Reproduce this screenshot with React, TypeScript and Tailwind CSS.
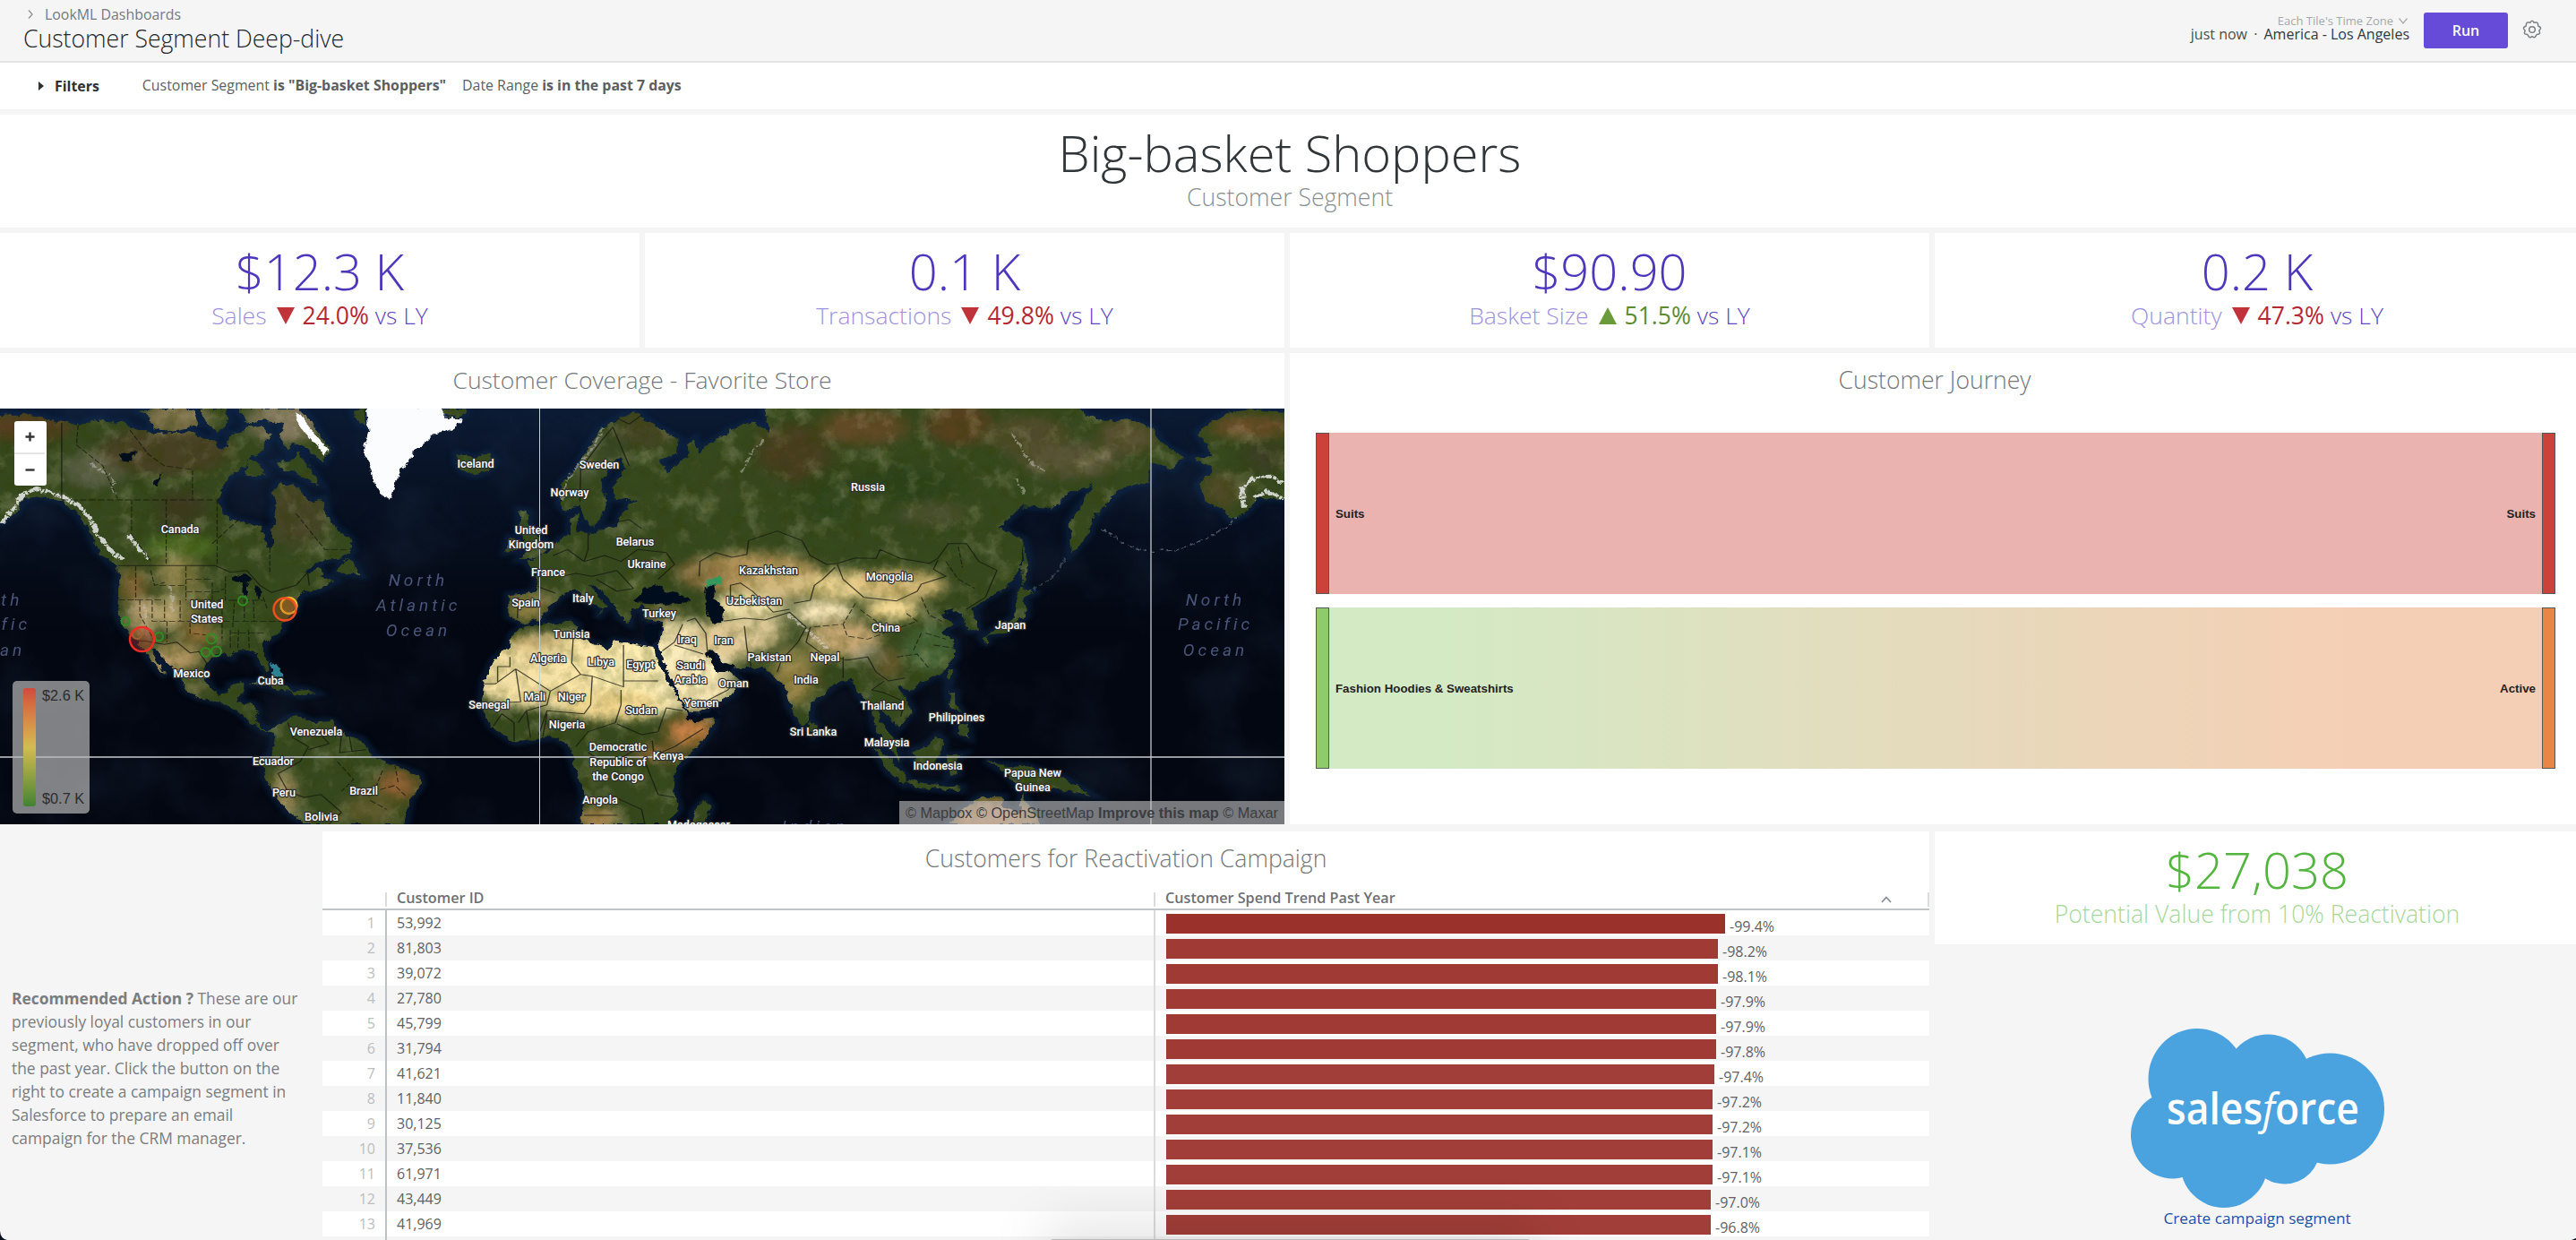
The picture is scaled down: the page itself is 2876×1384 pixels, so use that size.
import React from "react";

type Label = { t: string; x: number; y: number };

const LAND: string[] = [
  // North America
  "M-20 66 L60 70 L100 78 L150 92 L195 104 L215 88 L250 82 L262 98 L300 92 L330 118 L380 132 L420 130 L470 126 L500 150 L520 150 L530 182 L555 180 L560 132 L585 130 L600 112 L640 104 L655 140 L640 190 L606 210 L595 250 L566 262 L545 300 L530 350 L540 400 L560 418 L595 430 L626 440 L645 468 L652 518 L662 516 L662 450 L672 425 L664 395 L674 365 L664 330 L680 298 L715 306 L735 325 L752 365 L785 350 L792 400 L815 445 L850 485 L856 525 L830 550 L790 555 L762 572 L745 592 L760 600 L775 582 L785 610 L815 625 L780 652 L752 664 L738 655 L722 690 L715 725 L700 750 L688 765 L685 790 L640 838 L640 880 L656 912 L650 930 L634 905 L625 870 L600 855 L570 858 L562 880 L540 866 L512 885 L498 905 L498 950 L512 985 L530 1004 L555 1000 L562 972 L592 965 L588 1000 L575 1032 L615 1038 L626 1060 L622 1098 L650 1128 L680 1112 L672 1140 L648 1130 L612 1104 L584 1064 L540 1034 L486 1016 L452 990 L434 935 L402 890 L376 852 L366 850 L380 890 L404 942 L396 936 L352 858 L324 818 L298 770 L286 725 L288 650 L292 604 L280 575 L236 520 L216 452 L190 400 L150 360 L96 338 L60 352 L36 400 L-20 448 Z",
  "M340 56 L400 48 L470 48 L482 100 L440 118 L404 124 L370 112 L366 80 Z",
  "M486 48 L550 48 L556 90 L530 130 L505 100 Z",
  "M580 48 L728 48 L752 80 L775 130 L804 186 L788 224 L760 200 L735 170 L712 160 L700 190 L680 150 L690 100 L640 88 L604 100 Z",
  "M606 212 L626 228 L644 270 L622 278 L598 262 Z",
  "M670 230 L712 220 L725 195 L778 300 L750 290 L720 262 L690 254 Z",
  "M836 556 L850 552 L876 606 L840 600 L822 596 Z",
  "M860 56 L884 50 L890 105 L872 100 Z",
  "M1080 48 L1132 48 L1130 68 L1100 80 L1076 66 Z",
  "M1112 200 L1135 205 L1150 218 L1185 198 L1204 226 L1188 256 L1156 272 L1124 256 L1112 230 Z",
  "M604 972 L640 958 L690 976 L724 998 L690 994 L650 974 Z",
  "M706 994 L740 988 L766 1002 L730 1010 Z",
  // South America
  "M672 1120 L700 1084 L720 1076 L760 1098 L806 1096 L835 1138 L880 1158 L908 1214 L960 1244 L1018 1276 L1024 1306 L996 1356 L985 1440 L740 1440 L700 1396 L668 1340 L645 1284 L644 1234 L664 1190 Z",
  // British Isles
  "M1264 390 L1284 394 L1286 440 L1302 470 L1332 506 L1318 544 L1264 552 L1290 516 L1264 456 Z",
  "M1240 480 L1262 486 L1258 522 L1230 530 Z",
  // Eurasia
  "M1568 86 L1545 55 L1500 84 L1460 120 L1434 170 L1404 246 L1364 300 L1360 366 L1376 392 L1408 370 L1424 420 L1440 446 L1460 420 L1476 362 L1460 300 L1482 240 L1510 210 L1520 250 L1492 310 L1498 350 L1550 356 L1530 372 L1512 400 L1500 440 L1436 466 L1400 454 L1410 400 L1388 416 L1386 468 L1362 488 L1330 534 L1280 562 L1304 600 L1308 655 L1278 668 L1238 672 L1238 744 L1276 768 L1314 752 L1338 706 L1366 672 L1398 652 L1426 690 L1464 722 L1452 750 L1474 708 L1430 640 L1450 640 L1484 686 L1512 750 L1530 766 L1532 726 L1560 700 L1570 752 L1608 762 L1612 790 L1602 850 L1622 920 L1652 1010 L1674 1064 L1700 1066 L1780 1006 L1800 960 L1776 930 L1740 930 L1716 860 L1728 856 L1760 900 L1800 918 L1862 920 L1888 956 L1906 970 L1920 1040 L1950 1112 L1966 1096 L1972 1034 L2034 968 L2068 950 L2092 1010 L2120 1050 L2128 1120 L2170 1200 L2188 1230 L2184 1178 L2140 1096 L2136 1050 L2158 1072 L2184 1118 L2216 1060 L2184 978 L2214 990 L2246 960 L2292 930 L2322 880 L2320 830 L2290 792 L2322 768 L2288 744 L2310 718 L2336 736 L2356 790 L2378 790 L2366 720 L2400 680 L2454 640 L2490 560 L2486 486 L2430 450 L2480 376 L2560 380 L2606 326 L2660 300 L2640 350 L2602 430 L2604 530 L2640 480 L2664 404 L2720 324 L2764 300 L2792 296 L2796 230 L2850 250 L2878 208 L2830 172 L2800 112 L2740 82 L2690 92 L2636 68 L2620 40 L1860 40 L1872 130 L1830 92 L1776 120 L1724 168 L1700 200 L1690 150 L1672 170 L1676 210 L1620 262 L1600 220 L1646 200 L1650 150 L1600 110 Z",
  // Africa
  "M1276 776 L1320 770 L1390 760 L1404 775 L1396 810 L1440 832 L1480 856 L1494 826 L1540 836 L1590 846 L1594 880 L1620 950 L1652 1030 L1676 1086 L1736 1076 L1732 1112 L1690 1190 L1644 1252 L1638 1330 L1650 1390 L1620 1440 L1412 1440 L1424 1346 L1398 1250 L1384 1180 L1350 1146 L1250 1166 L1196 1112 L1170 1050 L1178 960 L1204 886 L1238 850 L1246 806 Z",
  "M1716 1356 L1728 1380 L1712 1440 L1680 1440 L1690 1392 Z",
  "M1970 1092 L1984 1110 L1976 1136 L1966 1120 Z",
  // East Asian islands
  "M2488 488 L2498 560 L2486 644 L2482 560 Z",
  "M2482 644 L2514 664 L2490 680 L2494 744 L2464 772 L2440 800 L2400 806 L2400 840 L2388 816 L2440 770 L2468 744 L2472 690 Z",
  "M2308 922 L2316 930 L2308 962 L2302 944 Z",
  "M2306 994 L2322 1000 L2322 1040 L2340 1068 L2330 1062 L2312 1046 Z M2330 1108 L2350 1100 L2356 1150 L2330 1134 Z",
  "M2218 1196 L2250 1180 L2280 1144 L2294 1160 L2286 1206 L2268 1244 L2226 1234 Z",
  "M2122 1176 L2156 1210 L2204 1280 L2196 1304 L2160 1264 Z M2190 1292 L2260 1304 L2336 1316 L2334 1326 L2240 1318 Z",
  "M2302 1210 L2340 1206 L2318 1232 L2330 1270 L2306 1284 Z",
  "M2396 1224 L2430 1240 L2500 1246 L2590 1288 L2650 1340 L2600 1330 L2540 1316 L2480 1320 L2450 1270 Z",
  "M2306 1440 L2340 1390 L2390 1346 L2440 1348 L2436 1384 L2480 1406 L2486 1340 L2504 1380 L2530 1440 Z",
  // Alaska on the far side of the date line
  "M2912 130 L2944 96 L2990 60 L3050 50 L3130 64 L3130 350 L3060 348 L3026 400 L2992 420 L2978 388 L2936 362 L2914 300 L2952 250 L2904 216 L2950 206 Z",
];

// Soft colour patches: cx, cy, rx, ry, colour, opacity
const PATCHES: [number, number, number, number, string, number][] = [
  [60, 110, 110, 50, "#5e3c20", 0.8], [230, 250, 70, 60, "#7d776c", 0.6], [400, 190, 160, 80, "#4e4026", 0.8],
  [430, 80, 80, 50, "#8b7a55", 0.9], [690, 90, 90, 70, "#8d7f66", 0.9], [720, 400, 80, 110, "#4b452a", 0.8],
  [440, 380, 60, 60, "#3f3520", 0.7], [440, 510, 90, 45, "#4d6d22", 0.9], [430, 600, 50, 60, "#a08f58", 0.9],
  [325, 640, 30, 60, "#936c3b", 0.9], [350, 740, 40, 60, "#c9ab80", 1], [415, 730, 40, 60, "#bfa873", 1],
  [470, 700, 30, 90, "#80733e", 0.7], [480, 800, 40, 40, "#a8773e", 0.8], [430, 880, 60, 50, "#b69863", 0.95],
  [400, 900, 20, 40, "#c9a77c", 0.8], [470, 980, 40, 20, "#71683a", 0.8], [580, 720, 60, 100, "#3a5623", 0.6],
  [690, 1340, 26, 80, "#cba878", 0.9], [965, 1310, 50, 50, "#a8683a", 0.8], [900, 1390, 70, 50, "#6f6434", 0.7],
  [1300, 700, 60, 50, "#9a8750", 0.5], [1280, 720, 36, 36, "#a98e50", 0.8], [1480, 170, 60, 80, "#3e482a", 0.6],
  [1420, 200, 24, 90, "#8d8b80", 0.5], [1570, 120, 70, 60, "#4b4426", 0.7],
  [1440, 930, 320, 130, "#fbe6a8", 1], [1560, 960, 120, 120, "#ffefb4", 1], [1260, 940, 90, 100, "#f8e2a6", 1],
  [1490, 1040, 120, 50, "#f2d68e", 1], [1300, 830, 60, 25, "#b59459", 0.7], [1690, 900, 90, 110, "#ffefc0", 1],
  [1700, 1000, 90, 60, "#fbe9b6", 1], [1650, 800, 60, 50, "#f6e4b2", 1], [1770, 820, 90, 70, "#e2ca96", 1],
  [1680, 1130, 60, 50, "#c98046", 1], [1600, 1200, 60, 30, "#a7703d", 0.7], [1450, 1420, 50, 40, "#b58d56", 0.9],
  [1830, 600, 160, 70, "#b5955b", 1], [1900, 640, 90, 50, "#d4b87c", 0.9], [1820, 710, 90, 50, "#f2e1a8", 1],
  [2000, 730, 80, 40, "#fdeabb", 1], [1850, 790, 60, 60, "#e6d09e", 0.9], [2050, 640, 100, 50, "#ead08c", 1],
  [2190, 640, 110, 50, "#dcbd7a", 0.95], [2170, 720, 64, 42, "#f8dc94", 1], [2050, 820, 90, 60, "#c8a873", 1],
  [1930, 950, 50, 90, "#a38b4c", 0.9], [1960, 870, 70, 30, "#89834b", 0.8], [2160, 900, 30, 50, "#8d6a3c", 0.7],
  [2260, 850, 60, 80, "#4a6a3c", 0.8], [2110, 870, 30, 20, "#b9b2a4", 0.8],
  [1930, 200, 90, 100, "#4f3c20", 0.75], [2100, 110, 110, 60, "#6a4c2c", 0.85], [2330, 100, 80, 70, "#633f20", 0.8],
  [2500, 140, 100, 70, "#5b5030", 0.7], [2600, 220, 120, 60, "#62583c", 0.8], [2200, 300, 120, 60, "#2c421a", 0.7],
  [2270, 400, 80, 40, "#545638", 0.7], [2010, 350, 60, 100, "#2f451d", 0.7], [2740, 140, 70, 60, "#69573a", 0.7],
  [1800, 300, 120, 60, "#3b4823", 0.6], [1700, 600, 60, 40, "#7a5f30", 0.8], [2420, 1420, 110, 60, "#c48858", 1],
  [3040, 110, 100, 40, "#70502c", 0.9], [3080, 210, 60, 50, "#3d3d26", 0.8], [2970, 320, 50, 60, "#5a4b2b", 0.7],
  [1600, 730, 60, 24, "#857447", 0.7], [1545, 640, 30, 40, "#5b6b30", 0.6],
];

const SNOW: string[] = [
  "M890 40 L1080 48 L1078 80 L1128 82 L1104 114 L1056 132 L1036 156 L1012 186 L1000 214 L984 232 L962 290 L950 354 L922 328 L906 284 L902 240 L884 200 L896 120 Z",
  "M712 60 L730 70 L752 110 L800 186 L790 206 L754 150 L724 96 Z",
];

const WHITE_LINES: string[] = [
  "M4 430 L40 370 L60 330 L96 318 L150 342 L190 372 L216 410 L240 470 L266 520 L298 552",
  "M310 470 L336 510 L360 550",
  "M3026 380 L3020 320 L3050 280 L3090 275 L3123 295 M3050 350 L3080 325 L3123 350",
];

const FROST_LINES: string[] = [
  "M1364 350 L1378 290 L1430 200 L1470 110",
  "M2460 130 L2500 220 L2540 260 M2470 280 L2490 330",
  "M1800 260 L1830 190 L1860 150",
  "M220 230 L270 280 L280 330",
  "M350 700 L356 760 M414 640 L420 730",
];

const BORDERS: string[] = [
  "M150 96 V354", "M288 574 H524 L560 596 L600 590 L632 640 L660 664 L720 640 L748 596 L752 640",
  "M320 826 L350 826 L400 838 L430 830 L462 866 L484 862 L506 908",
  "M700 1100 L712 1150 L750 1180 L730 1230 L676 1270 L700 1330 L740 1350 L780 1340 L830 1400 L800 1440 M750 1190 L800 1170 L780 1140 M830 1140 L826 1200 L890 1190 M850 1150 L856 1196",
  "M1394 810 L1390 900 L1412 938 L1440 944 L1516 980 V840 M1412 938 L1338 994 L1254 920 L1204 970 H1176 M1240 880 V912 H1210 V966 M1254 920 L1266 1030 L1180 1036 M1338 994 L1330 1040 L1280 1060 L1260 1100 M1440 944 L1436 1040 L1420 1070 L1330 1060 L1310 1140 M1510 990 V1040 L1496 1100 L1430 1130 L1400 1180 M1516 960 H1600 M1500 1104 L1560 1140 L1600 1130 L1620 1050 L1660 1060 M1586 1160 L1590 1210 L1640 1180 L1710 1120 M1200 1110 L1220 1070 L1250 1100 V1160 M1280 1060 L1290 1150 M1330 1070 L1320 1146",
  "M1430 1200 L1480 1240 L1560 1180 M1568 1230 L1600 1340 L1640 1350 M1480 1340 L1560 1390 L1568 1440 M1420 1410 H1500",
  "M1500 80 L1530 100 L1560 70 M1410 360 L1412 250 L1460 160 L1490 110 L1530 240",
  "M1430 465 V520 L1420 560 L1380 520 L1345 540 M1420 560 L1470 540 L1510 560 L1550 520 L1620 530 L1640 570 L1600 620 M1366 610 L1400 600 L1440 610 L1500 590 L1540 650 L1500 660 L1450 620 M1300 640 L1350 666 M1260 680 L1258 750 M1490 430 L1530 420 L1560 450",
  "M1700 610 L1702 560 L1740 530 L1780 546 L1816 536 L1820 490 L1890 458 L1950 490 L1970 540 L2010 570 L2036 566 L2080 548 L2130 550 L2140 520 L2190 550 L2260 566 L2280 550 L2306 500 L2350 500 L2380 560 L2424 590 L2396 680 L2350 720",
  "M2036 570 L2050 620 L2100 680 L2180 692 L2230 660 L2240 636 L2300 610 L2270 586 L2280 556",
  "M2030 580 L2000 620 L1980 640 L1970 690 L1930 700 M1776 690 V640 L1800 632 L1830 660 L1880 730 L1920 720 M1760 760 L1810 750 L1860 756 L1920 730 L1960 780 L1940 830 L1900 890 L1890 930",
  "M1670 760 L1690 750 L1716 800 L1720 860 M1810 776 L1816 850 L1826 910 M1610 860 L1640 830 L1660 770 M1640 840 L1710 870 M1700 1040 L1770 990 L1790 960",
  "M1970 780 L1960 830 L2000 870 L2060 890 L2110 880 L2130 930 L2160 960 L2200 950 M2050 880 V950 M2150 960 L2120 990 L2150 1000 L2200 1030 L2190 1080",
];

const DASHED: string[] = [
  "M150 354 H528 M190 104 L186 170 L250 240 L286 350 M316 120 L360 200 L400 240 L468 252 V354 M404 354 V574 M320 354 V470 L368 560 M516 500 L580 420 M528 354 V574 M656 470 V604 M720 400 L790 520 H850",
  "M288 688 H400 M330 576 V690 M366 590 L376 640 L400 630 M452 576 V690 M388 640 H452 M452 620 H514 M452 662 H530 L548 650 M400 690 V760 M462 690 H540 M438 690 V760 M340 690 V740 L376 826 M370 690 V760 H560 M406 760 V830 M462 764 V800 L500 806 M516 630 V686 M548 610 V690 L570 690 L566 780 M568 690 H640 M594 690 V760 M616 690 L618 760 M640 680 L650 720 M566 760 H690 M560 800 H640 M580 790 L578 856 M604 790 L606 850 M560 790 V850 M540 700 V820",
  "M820 1230 L860 1290 L830 1330 M930 1260 L910 1330 L960 1310 L990 1350 M960 1240 L968 1300 M900 1360 L940 1390",
  "M2080 700 L2050 770 L1970 780 M2050 770 L2060 810 L2110 820 L2150 800 L2130 760 L2090 720 M2170 790 L2230 760 L2200 730 M2240 680 L2260 740 L2290 760 M2180 880 L2230 870 L2260 920 M2250 800 L2300 820 M2300 560 L2330 620 L2370 650 M2330 510 L2340 580 M2240 800 L2220 860 M2270 840 L2320 850",
];

const COUNTRIES: Label[] = [
  { t: "Iceland", x: 531, y: 522 }, { t: "Sweden", x: 669, y: 523 }, { t: "Norway", x: 636, y: 554 },
  { t: "Canada", x: 201, y: 595 }, { t: "United", x: 593, y: 596 }, { t: "Kingdom", x: 593, y: 612 },
  { t: "Belarus", x: 709, y: 609 }, { t: "Ukraine", x: 722, y: 634 }, { t: "France", x: 612, y: 643 },
  { t: "Italy", x: 651, y: 672 }, { t: "Spain", x: 587, y: 677 }, { t: "United", x: 231, y: 679 },
  { t: "States", x: 231, y: 695 }, { t: "Tunisia", x: 638, y: 712 }, { t: "Algeria", x: 612, y: 739 },
  { t: "Libya", x: 671, y: 743 }, { t: "Egypt", x: 715, y: 746 }, { t: "Mexico", x: 214, y: 756 },
  { t: "Cuba", x: 302, y: 764 }, { t: "Mali", x: 597, y: 782 }, { t: "Niger", x: 638, y: 782 },
  { t: "Senegal", x: 546, y: 791 }, { t: "Sudan", x: 716, y: 797 }, { t: "Nigeria", x: 633, y: 813 },
  { t: "Venezuela", x: 353, y: 821 }, { t: "Democratic", x: 690, y: 838 }, { t: "Republic of", x: 690, y: 855 },
  { t: "the Congo", x: 690, y: 871 }, { t: "Ecuador", x: 305, y: 854 }, { t: "Peru", x: 317, y: 889 },
  { t: "Brazil", x: 406, y: 887 }, { t: "Angola", x: 670, y: 897 }, { t: "Bolivia", x: 359, y: 916 },
  { t: "Russia", x: 969, y: 548 }, { t: "Kazakhstan", x: 858, y: 641 }, { t: "Mongolia", x: 993, y: 648 },
  { t: "Uzbekistan", x: 842, y: 675 }, { t: "Turkey", x: 736, y: 689 }, { t: "China", x: 989, y: 705 },
  { t: "Japan", x: 1128, y: 702 }, { t: "Iraq", x: 767, y: 718 }, { t: "Iran", x: 808, y: 719 },
  { t: "Pakistan", x: 859, y: 738 }, { t: "Nepal", x: 921, y: 738 }, { t: "Saudi", x: 771, y: 747 },
  { t: "Arabia", x: 771, y: 763 }, { t: "Oman", x: 819, y: 767 }, { t: "India", x: 900, y: 763 },
  { t: "Yemen", x: 783, y: 789 }, { t: "Thailand", x: 985, y: 792 }, { t: "Philippines", x: 1068, y: 805 },
  { t: "Sri Lanka", x: 908, y: 821 }, { t: "Malaysia", x: 990, y: 833 }, { t: "Kenya", x: 746, y: 848 },
  { t: "Indonesia", x: 1047, y: 859 }, { t: "Papua New", x: 1153, y: 867 }, { t: "Guinea", x: 1153, y: 883 },
  { t: "Madagascar", x: 780, y: 925 },
];

const OCEANS: Label[] = [
  { t: "North", x: 465, y: 654 }, { t: "Atlantic", x: 465, y: 682 }, { t: "Ocean", x: 465, y: 710 },
  { t: "North", x: 1355, y: 676 }, { t: "Pacific", x: 1355, y: 703 }, { t: "Ocean", x: 1355, y: 732 },
  { t: "North", x: -10, y: 676 }, { t: "Pacific", x: -10, y: 703 }, { t: "Ocean", x: -10, y: 732 },
  { t: "Indian", x: 908, y: 929 },
];

function WorldMap() {
  return (
    <svg className="block h-[464px] w-[1434px]" viewBox="0 456 1434 464">
      <defs>
        <filter id="rough" x="-5%" y="-5%" width="110%" height="110%">
          <feTurbulence type="fractalNoise" baseFrequency="0.12" numOctaves="3" seed="4" result="n" />
          <feDisplacementMap in="SourceGraphic" in2="n" scale="8" xChannelSelector="R" yChannelSelector="G" />
        </filter>
        <filter id="halo" x="-5%" y="-5%" width="110%" height="110%"><feGaussianBlur stdDeviation="7" /></filter>
        <filter id="soft" x="-60%" y="-60%" width="220%" height="220%"><feGaussianBlur stdDeviation="18" /></filter>
        <filter id="grain" x="0" y="0" width="100%" height="100%">
          <feTurbulence type="fractalNoise" baseFrequency="0.06" numOctaves="5" seed="9" />
          <feColorMatrix type="matrix" values="0 0 0 0 0.03  0 0 0 0 0.05  0 0 0 0 0  1.9 0 0 0 -0.75" />
        </filter>
        <filter id="speck" x="0" y="0" width="100%" height="100%">
          <feTurbulence type="fractalNoise" baseFrequency="0.04" numOctaves="5" seed="23" />
          <feColorMatrix type="matrix" values="0 0 0 0 0.74  0 0 0 0 0.68  0 0 0 0 0.42  0 2 0 0 -1" />
        </filter>
        <filter id="swell" x="0" y="0" width="100%" height="100%">
          <feTurbulence type="fractalNoise" baseFrequency="0.012" numOctaves="4" seed="7" />
          <feColorMatrix type="matrix" values="0 0 0 0 0.06  0 0 0 0 0.12  0 0 0 0 0.24  0 1.8 0 0 -0.8" />
        </filter>
        <clipPath id="land">
          <path transform="translate(0 440) scale(0.45918 0.33333)" d={LAND.join(" ")} />
        </clipPath>
        <linearGradient id="polar" x1="0" y1="0" x2="0" y2="1">
          <stop offset="0" stopColor="#0b1a33" />
          <stop offset="0.35" stopColor="#081326" stopOpacity="0.5" />
          <stop offset="0.6" stopColor="#030711" stopOpacity="0" />
        </linearGradient>
      </defs>
      <rect y="456" width="1434" height="464" fill="#030711" />
      <rect y="456" width="1434" height="464" fill="url(#polar)" />
      <rect y="456" width="1434" height="464" filter="url(#swell)" opacity="0.18" />
      <g transform="translate(0 440) scale(0.45918 0.33333)">
        <path d={LAND.join(" ")} fill="none" stroke="#0f2b50" strokeWidth="24" opacity="0.5" filter="url(#halo)" />
      </g>
      <g filter="url(#rough)">
        <g transform="translate(0 440) scale(0.45918 0.33333)">
          <path d={LAND.join(" ")} fill="#36481f" />
        </g>
        <g clipPath="url(#land)">
          <g transform="translate(0 440) scale(0.45918 0.33333)">
            {PATCHES.map(([cx, cy, rx, ry, fill, o], i) => (
              <ellipse key={i} cx={cx} cy={cy} rx={rx} ry={ry} fill={fill} opacity={o} filter="url(#soft)" />
            ))}
          </g>
          <rect y="456" width="1434" height="464" filter="url(#speck)" opacity="0.35" />
          <rect y="456" width="1434" height="464" filter="url(#grain)" opacity="0.36" />
        </g>
        <g transform="translate(0 440) scale(0.45918 0.33333)">
          {/* inland seas, gulfs and lakes */}
          <path
            fill="#05101f"
            d="M1540 690 L1570 650 L1600 638 L1620 662 L1664 676 L1680 696 L1620 704 L1568 702 Z M1718 640 L1740 636 L1736 680 L1760 720 L1758 762 L1730 764 L1714 700 Z M1572 770 L1606 770 L1604 800 L1590 840 L1568 830 Z M1714 856 L1726 856 L1750 896 L1790 910 L1772 932 L1742 926 Z M1668 1078 L1740 1060 L1756 1078 L1690 1096 Z M570 610 L600 602 L614 620 L598 630 L600 676 L588 674 L590 634 L560 620 Z M620 630 L634 650 L630 690 L620 660 Z M290 200 L330 190 L320 220 L300 230 Z M370 300 L396 260 L380 310 Z"
          />
          <path fill="#1f9f62" opacity="0.8" d="M1716 622 L1750 610 L1754 636 L1722 646 Z" />
          <path fill="#3aa0b0" opacity="0.8" d="M660 900 L674 906 L690 946 L664 946 Z" />
          <path d={SNOW.join(" ")} fill="#fbfcfd" />
          <path d={WHITE_LINES.join(" ")} fill="none" stroke="#e9ebea" strokeWidth="11" strokeDasharray="26 4 9 3" opacity="0.85" />
          <path d={FROST_LINES.join(" ")} fill="none" stroke="#c5c6be" strokeWidth="7" strokeDasharray="18 6 6 5" opacity="0.5" />
          <path d="M3010 410 Q2910 530 2800 526 Q2730 510 2680 452" fill="none" stroke="#7d8c96" strokeWidth="4" strokeDasharray="12 8" opacity="0.6" />
          <path d="M2590 550 Q2570 620 2500 662" fill="none" stroke="#51677a" strokeWidth="4" strokeDasharray="14 6" opacity="0.6" />
          <path d="M1920 740 L1970 800 L2010 850" fill="none" stroke="#d8d2c8" strokeWidth="10" strokeDasharray="10 5" opacity="0.6" />
        </g>
      </g>
      <g transform="translate(0 440) scale(0.45918 0.33333)" fill="none" stroke="#15170f" strokeWidth="3" opacity="0.75">
        <path d={BORDERS.join(" ")} strokeLinejoin="round" />
        <path d={DASHED.join(" ")} strokeDasharray="16 6" strokeWidth="2.6" />
      </g>
      <g stroke="#c9ccd0">
        <path d="M602.5 456 V920" strokeWidth="1" />
        <path d="M1285 456 V920" strokeWidth="1.6" opacity="0.8" />
        <path d="M0 845 H1434" strokeWidth="2" opacity="0.75" />
      </g>
      <g fill="#56628c" fontFamily="Roboto, sans-serif" fontSize="19" fontStyle="italic" letterSpacing="4" textAnchor="middle" opacity="0.85">
        {OCEANS.map((l, i) => (
          <text key={i} x={l.x + 2} y={l.y}>{l.t}</text>
        ))}
      </g>
      <g fill="#fff" stroke="#2d2f31" strokeWidth="2.4" strokeLinejoin="round" paintOrder="stroke" fontFamily="Roboto, sans-serif" fontSize="12.6" fontWeight="500" textAnchor="middle">
        {COUNTRIES.map((l, i) => (
          <text key={i} x={l.x} y={l.y}>{l.t}</text>
        ))}
      </g>
      <g fill="#3b8c1e" fillOpacity="0.12" stroke="#2f8d22" strokeWidth="2">
        <circle cx="271" cy="670.5" r="5" />
        <circle cx="140" cy="693.5" r="4.5" />
        <circle cx="153" cy="708" r="5" stroke="#8a7a35" />
        <circle cx="177.5" cy="710.5" r="4.5" />
        <circle cx="236" cy="713" r="5.5" />
        <circle cx="229.5" cy="728" r="5" />
        <circle cx="241.5" cy="727" r="5.5" />
      </g>
      <circle cx="158.5" cy="713.5" r="13.5" fill="#d02a20" fillOpacity="0.3" stroke="#f12c22" strokeWidth="2.4" />
      <circle cx="322.5" cy="676" r="9" fill="#d08a20" fillOpacity="0.3" stroke="#f2b92b" strokeWidth="2.4" />
      <circle cx="318" cy="680" r="12.5" fill="#c05020" fillOpacity="0.3" stroke="#f4501f" strokeWidth="2.4" />
    </svg>
  );
}

type Kpi = { value: string; label: string; up?: boolean; pct: string };

const KPIS: Kpi[] = [
  { value: "$12.3 K", label: "Sales", pct: "24.0%" },
  { value: "0.1 K", label: "Transactions", pct: "49.8%" },
  { value: "$90.90", label: "Basket Size", up: true, pct: "51.5%" },
  { value: "0.2 K", label: "Quantity", pct: "47.3%" },
];

function KpiTile({ value, label, up, pct }: Kpi) {
  return (
    <div className="flex h-[128px] flex-col items-center bg-white pt-[10px] last:pl-1">
      <div className="text-[56px] leading-[64px] font-light text-[#4f37bd]">{value}</div>
      <div className="flex items-center text-[26.5px] leading-[36px] font-light">
        <span className="text-[#a091dc]">{label}</span>
        <svg className="mr-[9px] ml-[11px] h-[19px] w-[20px]" viewBox="0 0 20 19">
          <path d={up ? "M0 19 H20 L10 0 Z" : "M0 0 H20 L10 19 Z"} fill={up ? "#6a9a3a" : "#c1333a"} />
        </svg>
        <span className={up ? "font-normal text-[#5c8c2e]" : "font-normal text-[#b32833]"}>{pct}</span>
        <span className="ml-[7px] text-[#5f46c2]">vs LY</span>
      </div>
    </div>
  );
}

const ROWS: { id: string; pct: string; end: number }[] = [
  { id: "53,992", pct: "-99.4%", end: 624 }, { id: "81,803", pct: "-98.2%", end: 616 },
  { id: "39,072", pct: "-98.1%", end: 616 }, { id: "27,780", pct: "-97.9%", end: 614 },
  { id: "45,799", pct: "-97.9%", end: 614 }, { id: "31,794", pct: "-97.8%", end: 614 },
  { id: "41,621", pct: "-97.4%", end: 612 }, { id: "11,840", pct: "-97.2%", end: 610 },
  { id: "30,125", pct: "-97.2%", end: 610 }, { id: "37,536", pct: "-97.1%", end: 610 },
  { id: "61,971", pct: "-97.1%", end: 610 }, { id: "43,449", pct: "-97.0%", end: 608 },
  { id: "41,969", pct: "-96.8%", end: 608 },
];

function ReactivationTable() {
  return (
    <section className="h-[456px] w-[1794px] overflow-hidden bg-white">
      <h2 className="pt-[13px] text-center text-[26.6px] leading-[34px] font-light text-[#73787b]">
        Customers for Reactivation Campaign
      </h2>
      <div className="mt-[21px] flex h-[18px] items-center border-b-2 border-transparent text-[16.2px] font-semibold text-[#6e7072]">
        <div className="h-4 w-[72px] border-r-2 border-[#dcdcdc]" />
        <div className="h-4 w-[858px] border-r-2 border-[#dcdcdc] pl-[11px] leading-[13px]">Customer ID</div>
        <div className="flex h-4 flex-1 justify-between border-r-2 border-[#dcdcdc] pl-[11px] leading-[13px]">
          Customer Spend Trend Past Year
          <svg className="mt-1 mr-[40px] h-[8px] w-[12px]" viewBox="0 0 12 8" fill="none" stroke="#8a8d99" strokeWidth="1.8">
            <path d="M1 7 L6 1.5 L11 7" />
          </svg>
        </div>
      </div>
      <div className="border-t-2 border-[#bfc5c8]">
        {ROWS.map((r, i) => (
          <div key={r.id} className={`flex h-7 text-[16px] ${i % 2 ? "bg-[#f5f5f5]" : "bg-white"}`}>
            <div className="w-[72px] border-r-2 border-[#bfc2c5] pr-[11px] text-right leading-7 text-[#bdbdbd]">{i + 1}</div>
            <div className="w-[858px] border-r-2 border-[#dcdcdc] pl-[11px] leading-7 text-[#5f6264]">{r.id}</div>
            <div className="flex items-start pt-1 pl-3">
              <div className={`h-[22px] ${i === 0 ? "bg-[#9a322b]" : i < 6 ? "bg-[#9f3a34]" : "bg-[#a23e39]"}`} style={{ width: r.end }} />
              <span className="ml-[5px] leading-7 text-[#5f6264]">{r.pct}</span>
            </div>
          </div>
        ))}
        <div className="flex h-1 bg-[#f5f5f5]">
          <div className="w-[72px] border-r-2 border-[#bfc2c5]" />
          <div className="w-[858px] border-r-2 border-[#dcdcdc]" />
        </div>
      </div>
    </section>
  );
}

function SankeyLink({ left, right, source, target, flow }: { left: string; right: string; source: string; target: string; flow: string }) {
  return (
    <div className="flex h-[180px]">
      <div className={`w-[15px] border border-[#55585a] ${source}`} />
      <div className={`flex flex-1 items-center justify-between px-[7px] pt-[2px] font-['Liberation_Sans',sans-serif] text-[13.3px] font-bold text-[#222] ${flow}`}>
        <span>{left}</span>
        <span>{right}</span>
      </div>
      <div className={`w-[15px] border border-[#55585a] ${target}`} />
    </div>
  );
}

function Gear() {
  return (
    <svg className="h-[22px] w-[22px]" viewBox="0 0 22 22" fill="none" stroke="#7c8083" strokeWidth="1.5" strokeLinejoin="round">
      <circle cx="11" cy="11" r="3.3" />
      <path d="M11 1.2 C12.3 1.2 12.6 2 13 3.2 C14.4 3.5 15.6 2.4 16.7 3.3 C18 4.4 17.5 5.4 17.7 6.7 C18.6 8 20 7.6 20.5 9 C20.9 10.4 19.6 11 18.9 12 C18.9 13.4 20 14.2 19.4 15.4 C18.7 16.6 17.4 16.2 16.2 16.5 C15.2 17.4 15.3 18.9 14 19.5 C12.7 20 12 19.3 11 18.6 C10 19.3 9.3 20 8 19.5 C6.7 18.9 6.8 17.4 5.8 16.5 C4.6 16.2 3.3 16.6 2.6 15.4 C2 14.2 3.1 13.4 3.1 12 C2.4 11 1.1 10.4 1.5 9 C2 7.6 3.4 8 4.3 6.7 C4.5 5.4 4 4.4 5.3 3.3 C6.4 2.4 7.6 3.5 9 3.2 C9.4 2 9.7 1.2 11 1.2 Z" />
    </svg>
  );
}

function SalesforceLogo() {
  return (
    <svg className="h-[202px] w-[285px]" viewBox="2377 1147 285 202">
      <g fill="#4aa2de">
        <ellipse cx="2452" cy="1204" rx="54.5" ry="56" />
        <ellipse cx="2531" cy="1204" rx="48" ry="49.5" />
        <ellipse cx="2600.5" cy="1237.5" rx="60.5" ry="62" />
        <ellipse cx="2424.5" cy="1267" rx="46.5" ry="48.5" />
        <ellipse cx="2482" cy="1298" rx="49" ry="50" />
        <ellipse cx="2549.5" cy="1281" rx="40" ry="40.5" />
        <rect x="2430" y="1200" width="150" height="95" />
      </g>
      <text x="2418" y="1254.5" fontSize="48" fontWeight="600" fill="#fff" fontFamily="Open Sans, sans-serif" textLength="215" lengthAdjust="spacingAndGlyphs">
        sales<tspan fontStyle="italic" fontWeight="500">f</tspan>orce
      </text>
    </svg>
  );
}

export default function App() {
  return (
    <div className="relative h-[1384px] w-[2876px] overflow-hidden bg-[#f5f5f5] font-['Open_Sans',sans-serif]">
      <header className="flex h-[70px] justify-between border-b-2 border-[#e5e5e5]">
        <div>
          <div className="flex items-center pt-[5px] pl-[31px] text-[15.9px] leading-[22px] text-[#75797b]">
            <svg className="mr-[12px] h-[10px] w-[7px]" viewBox="0 0 7 10" fill="none" stroke="#8d9193" strokeWidth="1.3">
              <path d="M1 .5 L5 5 L1 9.5" />
            </svg>
            LookML Dashboards
          </div>
          <h1 className="pl-[26px] text-[26.6px] leading-[32px] font-light text-[#23282b]">Customer Segment Deep-dive</h1>
        </div>
        <div className="flex items-start">
          <div className="pt-[14px] text-right">
            <div className="flex items-center justify-end text-[13px] leading-[18px] text-[#a5a8aa]">
              Each Tile's Time Zone
              <svg className="mr-[2px] ml-[6px] h-[7px] w-[10px]" viewBox="0 0 10 7" fill="none" stroke="#a5a8aa" strokeWidth="1.2">
                <path d="M.5 .5 L5 6 L9.5 .5" />
              </svg>
            </div>
            <div className="text-[16px] leading-[12px] text-[#4a4e50]">
              just now <span className="mx-[3px]">·</span> <span className="font-medium text-[#33383b]">America - Los Angeles</span>
            </div>
          </div>
          <button className="mt-[14px] ml-4 h-10 w-[94px] rounded-[3px] bg-[#664ad8] text-[16px] font-semibold text-white">Run</button>
          <div className="mt-[22px] mr-[38px] ml-4"><Gear /></div>
        </div>
      </header>

      <div className="flex h-[52px] items-center bg-white pl-[43px] text-[15.9px] text-[#5b5f62]">
        <svg className="h-[10px] w-[6px]" viewBox="0 0 6 10"><path d="M0 0 L6 5 L0 10 Z" fill="#2c3236" /></svg>
        <span className="ml-3 pt-px font-bold text-[#2c3236]">Filters</span>
        <span className="ml-[48px]">Customer Segment <b>is "Big-basket Shoppers"</b></span>
        <span className="ml-[18px]">Date Range <b>is in the past 7 days</b></span>
      </div>

      <section className="mt-[6px] flex h-[126px] flex-col items-center bg-white pt-[8px] pl-1">
        <div className="text-[56px] leading-[68px] font-light text-[#2f3538]">Big-basket Shoppers</div>
        <div className="text-[26.6px] leading-[32px] font-light text-[#8a8f91]">Customer Segment</div>
      </section>

      <div className="mt-[6px] grid grid-cols-[714px_714px_714px_716px] gap-[6px]">
        {KPIS.map((k) => <KpiTile key={k.label} {...k} />)}
      </div>

      <div className="mt-[6px] flex gap-[6px]">
        <section className="h-[526px] w-[1434px] bg-white">
          <h2 className="h-[62px] pt-[13px] text-center text-[26.5px] leading-[34px] font-light text-[#73787b]">Customer Coverage - Favorite Store</h2>
          <div className="relative">
            <WorldMap />
            <div className="absolute top-[14px] left-4 flex h-[72px] w-9 flex-col rounded-[3px] bg-white">
              <div className="mr-[2px] flex flex-1 items-center justify-center border-b-2 border-[#e4e4e4]">
                <svg className="h-[11px] w-[11px]" viewBox="0 0 12 12" stroke="#333" strokeWidth="2.6"><path d="M6 .5 V11.5 M.5 6 H11.5" /></svg>
              </div>
              <div className="mr-[2px] flex flex-1 items-center justify-center">
                <svg className="h-[11px] w-[11px]" viewBox="0 0 12 12" stroke="#333" strokeWidth="2.6"><path d="M.5 6 H11.5" /></svg>
              </div>
            </div>
            <div className="absolute top-[304px] left-[14px] flex h-[148px] w-[86px] rounded-[5px] bg-[#b5b5b5]/70 py-2 pl-3 font-['Liberation_Sans',sans-serif] text-[16.3px] text-[#2a2c2e]">
              <div className="h-[132px] w-[14px] rounded-[3px] bg-linear-to-b from-[#cf4a3c] via-[#d4bb52] to-[#3f8334]" />
              <div className="ml-[7px] flex flex-col justify-between leading-[17px]"><span>$2.6 K</span><span>$0.7 K</span></div>
            </div>
            <div className="absolute right-0 bottom-0 flex h-[26px] w-[430px] items-center justify-center bg-[#c4c4c4]/60 font-['Liberation_Sans',sans-serif] text-[16.3px] whitespace-pre text-[#3b3d40]">
              © Mapbox © OpenStreetMap <b>Improve this map</b> © Maxar
            </div>
          </div>
        </section>
        <section className="h-[526px] flex-1 bg-white">
          <h2 className="pt-[13px] pl-1 text-center text-[26.6px] leading-[34px] font-light text-[#73787b]">Customer Journey</h2>
          <div className="mt-[42px] flex flex-col gap-[15px] pr-[23px] pl-[29px]">
            <SankeyLink left="Suits" right="Suits" source="bg-[#cb423b]" target="bg-[#cb423b]" flow="bg-[#ebb3b0]" />
            <SankeyLink left="Fashion Hoodies & Sweatshirts" right="Active" source="bg-[#90cb6b]" target="bg-[#e98646]" flow="bg-linear-to-r from-[#d3eac5] from-8% via-[#e5dabc] via-50% to-[#f5cfb5] to-85%" />
          </div>
        </section>
      </div>

      <div className="mt-2 flex">
        <aside className="w-[360px] pt-[173px] pl-[13px] text-[17.4px] leading-[26px] text-[#7a7e81]">
          <b>Recommended Action ?</b> These are our<br />previously loyal customers in our<br />segment, who have dropped off over<br />
          the past year. Click the button on the<br />right to create a campaign segment in<br />Salesforce to prepare an email<br />campaign for the CRM manager.
        </aside>
        <ReactivationTable />
        <div className="ml-[6px] flex flex-1 flex-col items-center">
          <div className="flex h-[126px] w-full flex-col items-center bg-white pt-[10px] pl-1">
            <div className="text-[56px] leading-[64px] font-light text-[#52b53e]">$27,038</div>
            <div className="text-[26.6px] leading-[36px] font-light text-[#a5d898]">Potential Value from 10% Reactivation</div>
          </div>
          <div className="mt-[93px] h-[202px] pl-1"><SalesforceLogo /></div>
          <a className="pl-1 text-[17.2px] leading-[22px] text-[#1c50a8]">Create campaign segment</a>
        </div>
      </div>

      {/* shadow of the dock below the window, and the window's rounded corners */}
      <div className="absolute top-[1383px] left-[1172px] h-5 w-[537px] rounded-[4px] bg-[#b9b9b9] shadow-[0_0_64px_6px_rgba(0,0,0,0.2)]" />
      <svg className="absolute bottom-0 left-0 h-[10px] w-[8px]" viewBox="0 0 8 10"><path d="M0 0 Q0.500 8.500 8 10 H0 Z" fill="#0a1020" /></svg>
      <svg className="absolute right-0 bottom-0 h-[2px] w-[5px]" viewBox="0 0 5 2"><path d="M5 0 V2 H0 Z" fill="#0a1020" /></svg>
    </div>
  );
}
